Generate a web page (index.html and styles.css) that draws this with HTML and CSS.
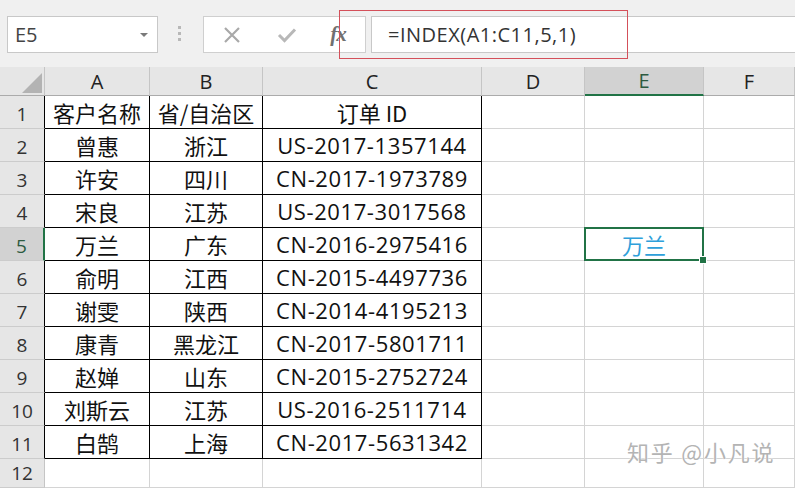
FILE: index.html
```html
<!DOCTYPE html>
<html lang="zh">
<head>
<meta charset="utf-8">
<link rel="stylesheet" href="styles.css">
</head>
<body>
<div class="toolbar">
  <div class="namebox"><span>E5</span><span class="caret"></span></div>
  <div class="grip"><i></i><i></i><i></i></div>
  <div class="fbtns">
    <div class="b bx"><svg width="18" height="18" viewBox="0 0 18 18"><path d="M2 2 L16 16 M16 2 L2 16" stroke="#a9a9a9" stroke-width="2.2" fill="none"/></svg></div>
    <div class="b bc"><svg width="20" height="16" viewBox="0 0 20 16"><path d="M2 8 L7.5 13.5 L18 2.5" stroke="#b8b8b8" stroke-width="3" fill="none"/></svg></div>
    <div class="b bf"><span class="fx">fx</span></div>
  </div>
  <div class="finput">=INDEX(A1:C11,5,1)</div>
  <div class="annot"></div>
</div>
<div class="sheet">
  <div class="cell corner"><svg width="20" height="20" viewBox="0 0 20 20"><polygon points="20,0 20,20 0,20" fill="#b3b3b3"/></svg></div>
  <div class="cell ch">A</div>
  <div class="cell ch">B</div>
  <div class="cell ch">C</div>
  <div class="cell ch">D</div>
  <div class="cell ch on">E</div>
  <div class="cell ch">F</div>

  <div class="cell rh k">1</div>
  <div class="cell t">客户名称</div>
  <div class="cell t">省/自治区</div>
  <div class="cell t">订单 ID</div>
  <div class="cell"></div><div class="cell"></div><div class="cell"></div>

  <div class="cell rh k">2</div>
  <div class="cell t">曾惠</div><div class="cell t">浙江</div><div class="cell t id">US-2017-1357144</div>
  <div class="cell"></div><div class="cell"></div><div class="cell"></div>

  <div class="cell rh k">3</div>
  <div class="cell t">许安</div><div class="cell t">四川</div><div class="cell t id">CN-2017-1973789</div>
  <div class="cell"></div><div class="cell"></div><div class="cell"></div>

  <div class="cell rh k">4</div>
  <div class="cell t">宋良</div><div class="cell t">江苏</div><div class="cell t id">US-2017-3017568</div>
  <div class="cell"></div><div class="cell"></div><div class="cell"></div>

  <div class="cell rh on">5</div>
  <div class="cell t">万兰</div><div class="cell t">广东</div><div class="cell t id">CN-2016-2975416</div>
  <div class="cell"></div><div class="cell sel">万兰<span class="handle"></span></div><div class="cell"></div>

  <div class="cell rh k">6</div>
  <div class="cell t">俞明</div><div class="cell t">江西</div><div class="cell t id">CN-2015-4497736</div>
  <div class="cell"></div><div class="cell"></div><div class="cell"></div>

  <div class="cell rh k">7</div>
  <div class="cell t">谢雯</div><div class="cell t">陕西</div><div class="cell t id">CN-2014-4195213</div>
  <div class="cell"></div><div class="cell"></div><div class="cell"></div>

  <div class="cell rh k">8</div>
  <div class="cell t">康青</div><div class="cell t">黑龙江</div><div class="cell t id">CN-2017-5801711</div>
  <div class="cell"></div><div class="cell"></div><div class="cell"></div>

  <div class="cell rh k">9</div>
  <div class="cell t">赵婵</div><div class="cell t">山东</div><div class="cell t id">CN-2015-2752724</div>
  <div class="cell"></div><div class="cell"></div><div class="cell"></div>

  <div class="cell rh k">10</div>
  <div class="cell t">刘斯云</div><div class="cell t">江苏</div><div class="cell t id">US-2016-2511714</div>
  <div class="cell"></div><div class="cell"></div><div class="cell"></div>

  <div class="cell rh k">11</div>
  <div class="cell t">白鹄</div><div class="cell t">上海</div><div class="cell t id">CN-2017-5631342</div>
  <div class="cell"></div><div class="cell"></div><div class="cell"></div>

  <div class="cell rh">12</div>
  <div class="cell"></div><div class="cell"></div><div class="cell"></div>
  <div class="cell"></div><div class="cell"></div><div class="cell"></div>
</div>
<div class="watermark">知乎 @小凡说</div>
</body>
</html>
```
FILE: styles.css
```css
html, body {
  margin: 0;
  padding: 0;
}
body {
  width: 795px;
  height: 488px;
  overflow: hidden;
  background: #ffffff;
  font-family: "Open Sans", "Noto Sans CJK SC", sans-serif;
  position: relative;
}
.toolbar {
  height: 67px;
  box-sizing: border-box;
  background: #f0f0f0;
  display: flex;
  align-items: flex-start;
  padding: 16px 0 0 7px;
  position: relative;
}
.namebox {
  width: 151px;
  height: 37px;
  box-sizing: border-box;
  background: #fff;
  border: 1px solid #c8c8c8;
  display: flex;
  align-items: center;
  justify-content: space-between;
  padding: 0 9px 0 7px;
  font-size: 20px;
  color: #444;
}
.caret {
  width: 0;
  height: 0;
  border-left: 4px solid transparent;
  border-right: 4px solid transparent;
  border-top: 4px solid #7a7a7a;
}
.grip {
  margin-left: 20px;
  margin-top: 10px;
  display: flex;
  flex-direction: column;
  gap: 3px;
}
.grip i {
  display: block;
  width: 3px;
  height: 3px;
  background: #b8b8b8;
}
.fbtns {
  margin-left: 22px;
  width: 163px;
  height: 37px;
  box-sizing: border-box;
  background: #fff;
  border: 1px solid #cfcfcf;
  display: flex;
}
.b {
  display: flex;
  align-items: center;
  justify-content: center;
}
.bx { width: 56px; }
.bc { width: 54px; }
.bf { width: 48px; }
.fx {
  font-family: "Liberation Serif", serif;
  font-style: italic;
  font-weight: bold;
  font-size: 21px;
  color: #707070;
  letter-spacing: -1px;
}
.finput {
  margin-left: 5px;
  flex: 1;
  height: 37px;
  box-sizing: border-box;
  background: #fff;
  border: 1px solid #c8c8c8;
  border-right: none;
  display: flex;
  align-items: center;
  padding-left: 16px;
  font-size: 20px;
  letter-spacing: 0.5px;
  color: #333;
}
.annot {
  position: absolute;
  left: 339px;
  top: 10px;
  width: 289px;
  height: 49px;
  box-sizing: border-box;
  border: 1px solid #d4505a;
}
.sheet {
  display: grid;
  grid-template-columns: 45px 105px 113px 219px 103px 119px 91px;
  grid-template-rows: 29px repeat(11, 33px) 29px;
}
.cell {
  box-sizing: border-box;
  border-right: 1px solid #d4d4d4;
  border-bottom: 1px solid #d4d4d4;
  display: flex;
  align-items: center;
  justify-content: center;
  font-size: 22px;
  color: #111;
  font-family: "Noto Sans CJK SC", sans-serif;
  white-space: nowrap;
}
.corner {
  background: #e6e6e6;
  border-right-color: #c5c5c5;
  border-bottom-color: #ababab;
  justify-content: flex-end;
  align-items: flex-end;
  padding: 0 2px 2px 0;
}
.ch {
  background: #e6e6e6;
  border-right-color: #c5c5c5;
  border-bottom-color: #ababab;
  font-family: "Open Sans", sans-serif;
  font-size: 20px;
  color: #222;
}
.ch.on {
  background: #d2d2d2;
  border-bottom: 2px solid #217346;
  color: #2d5a40;
}
.rh {
  background: #e6e6e6;
  border-right-color: #c5c5c5;
  border-bottom-color: #cccccc;
  font-family: "Open Sans", sans-serif;
  font-size: 19px;
  line-height: 24px;
  color: #333;
  align-items: flex-end;
  padding-bottom: 2px;
}
.rh.k {
  border-right-color: #000;
}
.rh.on {
  background: #d2d2d2;
  border-right: 2px solid #217346;
  color: #2d5a40;
}
.t {
  border-right-color: #000;
  border-bottom-color: #000;
}
.id {
  font-family: "Open Sans", "Noto Sans CJK SC", sans-serif;
  font-size: 22px;
  letter-spacing: 0.6px;
}
.sel {
  position: relative;
  color: #2ea0da;
}
.sel::after {
  content: "";
  position: absolute;
  left: -1px;
  top: -1px;
  right: -1px;
  bottom: -1px;
  border: 2px solid #217346;
}
.handle {
  position: absolute;
  right: -4px;
  bottom: -4px;
  width: 6px;
  height: 6px;
  background: #217346;
  border: 1px solid #fff;
  z-index: 2;
}
.watermark {
  position: absolute;
  left: 627px;
  top: 435px;
  font-family: "Noto Sans CJK SC", sans-serif;
  font-size: 22px;
  color: #b4b4b4;
  text-shadow: 0 0 2px #fff, 0 0 1px #fff;
  letter-spacing: 1.8px;
}
```
